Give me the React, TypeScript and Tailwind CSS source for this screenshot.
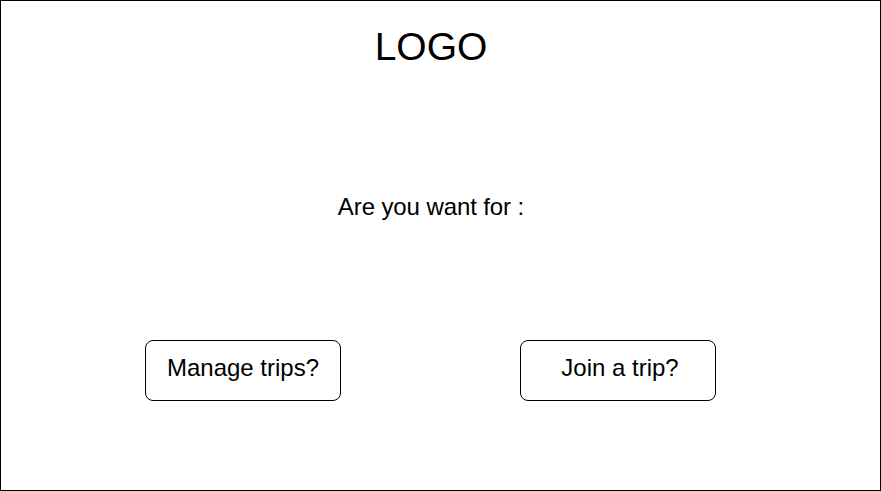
export default function App() {
  return (
    <div className="w-[881px] h-[491px] border border-black bg-white font-['Liberation_Sans',Arial,sans-serif] text-black flex flex-col">
      <div className="w-[860px] flex flex-col items-center">
        <h1 className="mt-[22px] text-[39px] leading-[48px]">LOGO</h1>
        <p className="mt-[122px] text-[24px] leading-[28px] tracking-[-0.1px]">Are you want for :</p>
      </div>
      <div className="mt-[119px] pl-[144px] flex gap-[179px]">
        <button className="w-[196px] h-[61px] border border-black rounded-lg text-[24px] leading-[28px] pb-[6px]">Manage trips?</button>
        <button className="w-[196px] h-[61px] border border-black rounded-lg text-[24px] leading-[28px] pb-[6px] pl-[4px]">Join a trip?</button>
      </div>
    </div>
  );
}
